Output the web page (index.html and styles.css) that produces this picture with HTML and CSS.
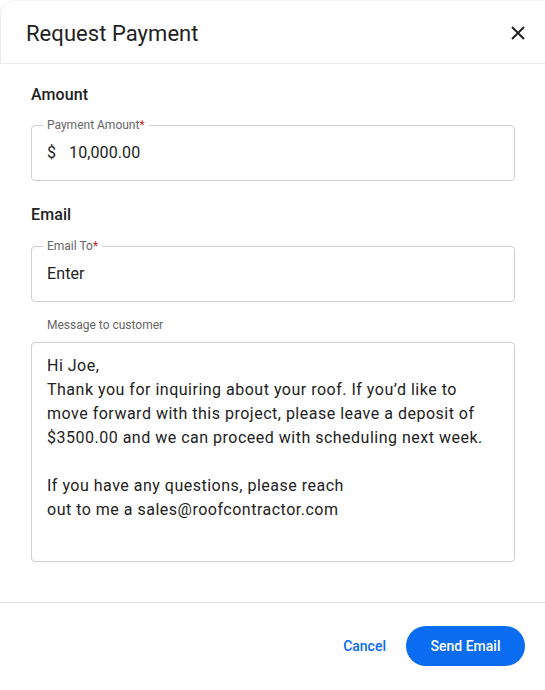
FILE: index.html
```html
<!DOCTYPE html>
<html>
<head>
<meta charset="utf-8">
<link rel="stylesheet" href="styles.css">
</head>
<body>
<div class="dialog">
  <header class="header">
    <h1 class="title">Request Payment</h1>
    <button class="close" aria-label="Close">
      <svg width="14" height="14" viewBox="0 0 14 14"><path d="M1 1L13 13M13 1L1 13" stroke="#222" stroke-width="2" fill="none"/></svg>
    </button>
  </header>
  <main class="body">
    <h2 class="section">Amount</h2>
    <div class="field">
      <span class="legend">Payment Amount<span class="req">*</span></span>
      <div class="value"><span class="cur">$</span>10,000.00</div>
    </div>
    <h2 class="section email">Email</h2>
    <div class="field field-email">
      <span class="legend">Email To<span class="req">*</span></span>
      <div class="value">Enter</div>
    </div>
    <div class="msg-label">Message to customer</div>
    <div class="textarea">
      <p>Hi Joe,<br>Thank you for inquiring about your roof. If you’d like to<br>move forward with this project, please leave a deposit of<br>$3500.00 and we can proceed with scheduling next week.</p>
      <p>If you have any questions, please reach<br>out to me a sales@roofcontractor.com</p>
    </div>
  </main>
  <footer class="footer">
    <button class="btn-text">Cancel</button>
    <button class="btn-primary">Send Email</button>
  </footer>
</div>
</body>
</html>
```

FILE: styles.css
```css
* { box-sizing: border-box; }
html, body { margin: 0; padding: 0; background: #fff; }
body { font-family: Roboto, "Liberation Sans", sans-serif; color: #222; }
.dialog { width: 545px; height: 690px; display: flex; flex-direction: column; }
.header {
  height: 64px; flex: none;
  display: flex; align-items: center; justify-content: space-between;
  padding: 2px 20px 0 25px;
  border: 1px solid #ececec; border-right: none; border-top-color: #f4f4f4;
  border-top-left-radius: 14px;
}
.title { margin: 0; font-size: 22px; font-weight: 400; color: #222; letter-spacing: 0.05px; }
.close { background: none; border: 0; padding: 0; width: 14px; height: 14px; display: flex; cursor: pointer; }
.body { padding: 20px 30px 0 31px; flex: 1; }
.section { margin: 0; font-size: 16px; font-weight: 500; color: #222; line-height: 22px; letter-spacing: 0.1px; }
.section.email { margin-top: 23px; }
.field {
  margin-top: 19px; padding: 0 15px; height: 56px;
  border: 1px solid #cfcfcf; border-radius: 4px;
  position: relative;
}
.field-email { margin-top: 20px; }
.legend {
  position: absolute; top: -8px; left: 11px;
  padding: 0 4px; background: #fff;
  font-size: 12px; color: #666; line-height: 14px;
}
.req { color: #c62828; }
.value { font-size: 16px; line-height: 20px; margin-top: 17px; letter-spacing: 0.1px; color: #222; }
.cur { margin-right: 13px; }
.msg-label { font-size: 12px; color: #666; margin: 15px 0 0 16px; line-height: 16px; }
.textarea {
  margin-top: 9px; height: 220px;
  border: 1px solid #cfcfcf; border-radius: 4px;
  padding: 11px 15px 0;
  font-size: 16px; line-height: 24px; letter-spacing: 0.5px; color: #222;
}
.textarea p { margin: 0 0 24px; }
.footer {
  height: 87px; flex: none; border-top: 1px solid #e0e0e0;
  display: flex; align-items: center; justify-content: flex-end;
  padding: 0 20px 0 0; gap: 20px;
  margin-bottom: 1px;
}
.btn-text { background: none; border: 0; font-family: inherit; font-size: 14px; font-weight: 500; color: #0a6cf0; padding: 0; cursor: pointer; }
.btn-primary {
  background: #0a6cf0; color: #fff; border: 0; border-radius: 20px;
  height: 40px; width: 119px; font-family: inherit; font-size: 14px; font-weight: 500; cursor: pointer;
}
```
